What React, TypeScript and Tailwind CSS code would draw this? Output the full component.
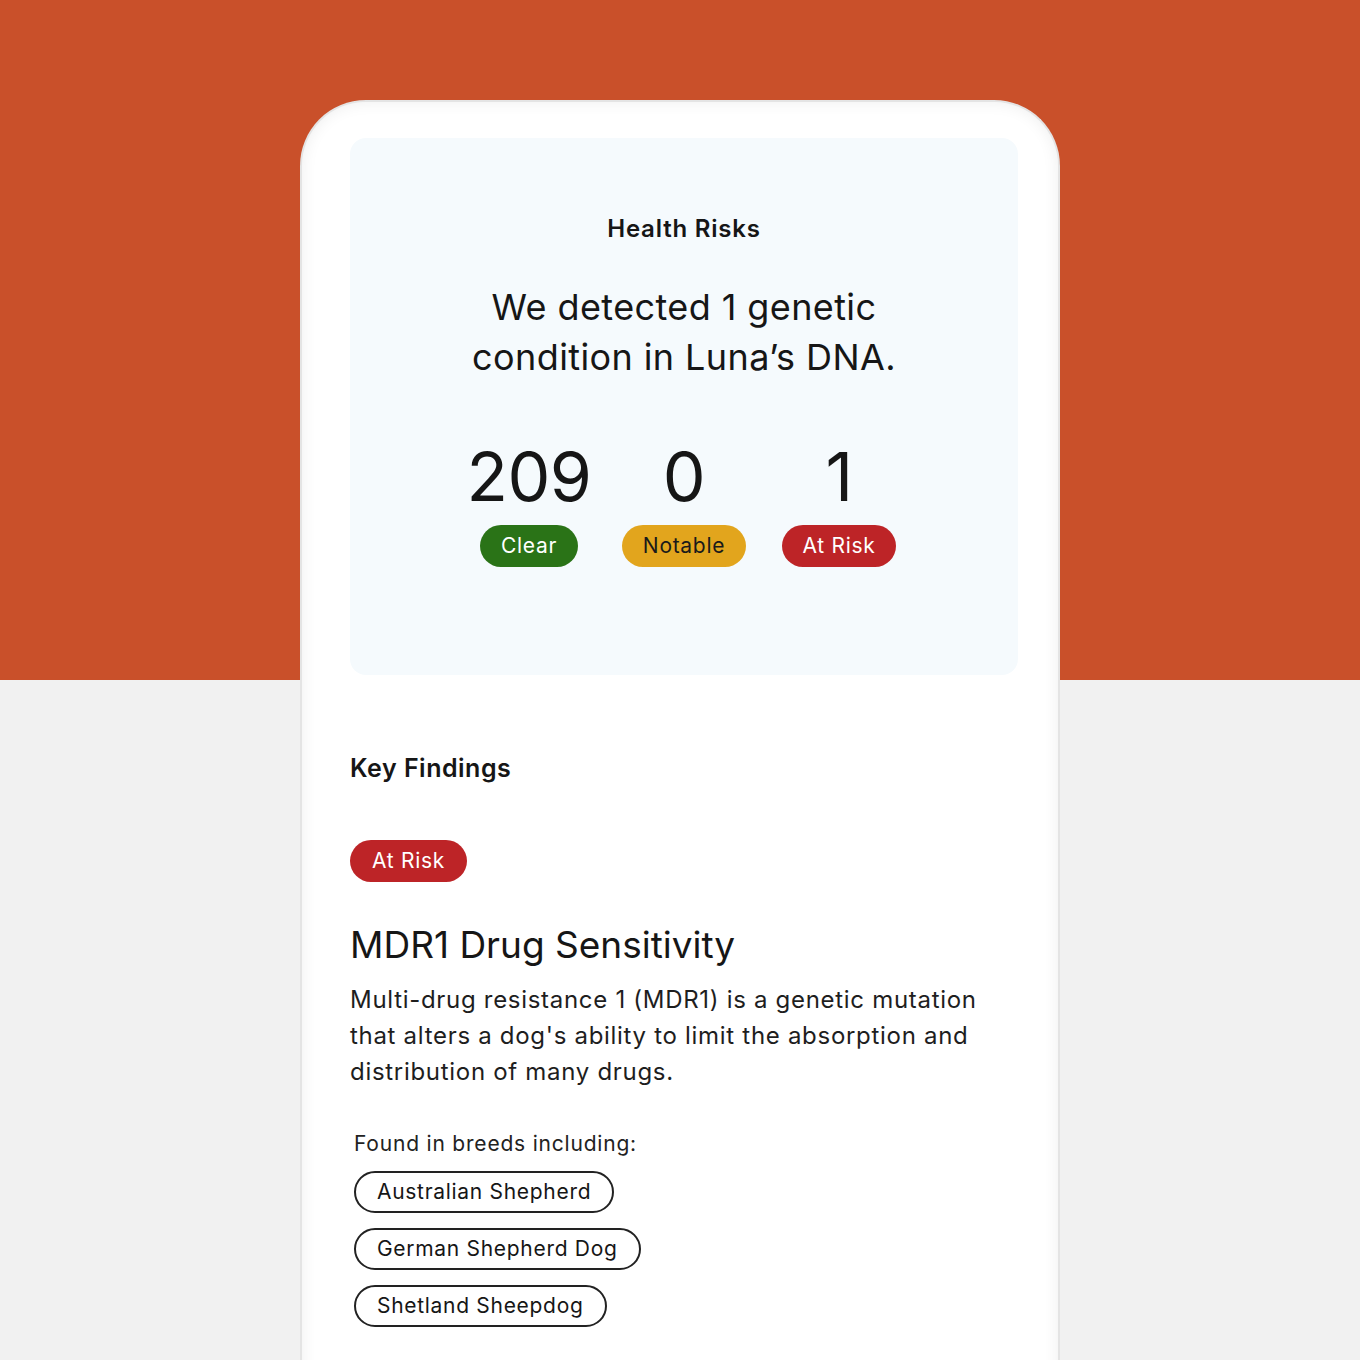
import React from 'react'

const font = { fontFamily: 'Inter, "Liberation Sans", sans-serif' }

const stats = [
  { value: '209', label: 'Clear', pill: 'bg-[#2a7317] text-white' },
  { value: '0', label: 'Notable', pill: 'bg-[#e2a51d] text-[#1a1a1a]' },
  { value: '1', label: 'At Risk', pill: 'bg-[#bd2427] text-white' },
]

const breeds = ['Australian Shepherd', 'German Shepherd Dog', 'Shetland Sheepdog']

export default function App() {
  return (
    <div
      className="h-[1360px] w-[1360px] overflow-hidden bg-[linear-gradient(to_bottom,#c9502a_680px,#f1f1f1_680px)] pt-[100px]"
      style={font}
    >
      <div className="mx-auto h-[1300px] w-[760px] rounded-t-[66px] border-2 border-b-0 border-[#e4e4e4] bg-white pl-[48px] pr-[40px] pt-[36px] text-[#161616] shadow-[inset_0_0_16px_rgba(0,0,0,0.07)]">
        {/* summary card */}
        <div className="flex flex-col items-center rounded-[16px] bg-[#f5fafd] pb-[108px] pt-[76px]">
          <h2 className="text-[24px] font-semibold leading-[30px] tracking-[0.8px]">Health Risks</h2>
          <p className="mt-[38px] text-center text-[36px] leading-[50px] tracking-[0.4px]">
            We detected 1 genetic
            <br />
            condition in Luna’s DNA.
          </p>
          <div className="mt-[60px] flex">
            {stats.map((s) => (
              <div key={s.label} className="flex w-[155px] flex-col items-center">
                <span className="text-[68px] leading-[68px] tracking-[-0.5px]">{s.value}</span>
                <span
                  className={`mt-[15px] flex h-[42px] items-center rounded-full px-[21px] text-[21px] tracking-[0.7px] ${s.pill}`}
                >
                  {s.label}
                </span>
              </div>
            ))}
          </div>
        </div>

        {/* findings */}
        <h3 className="mt-[78px] text-[25px] font-semibold leading-[30px] tracking-[0.5px]">Key Findings</h3>
        <span className="mt-[57px] flex h-[42px] w-fit items-center rounded-full bg-[#bd2427] px-[22px] text-[21px] tracking-[0.7px] text-white">
          At Risk
        </span>
        <h4 className="mt-[40px] text-[37px] leading-[46px] tracking-[0px]">MDR1 Drug Sensitivity</h4>
        <p className="mt-[14px] w-[660px] text-[24px] leading-[36px] tracking-[0.7px] text-[#1e1e1e]">
          Multi-drug resistance 1 (MDR1) is a genetic mutation that alters a dog's ability to limit the absorption
          and distribution of many drugs.
        </p>
        <div className="ml-[4px] mt-[40px]">
          <p className="text-[21px] leading-[28px] tracking-[0.8px] text-[#222]">Found in breeds including:</p>
          <div className="mt-[13px] flex flex-col items-start gap-[15px]">
            {breeds.map((b) => (
              <span
                key={b}
                className="flex h-[42px] items-center rounded-full border-2 border-[#222] px-[21px] text-[21px] tracking-[0.7px]"
              >
                {b}
              </span>
            ))}
          </div>
        </div>
      </div>
    </div>
  )
}
